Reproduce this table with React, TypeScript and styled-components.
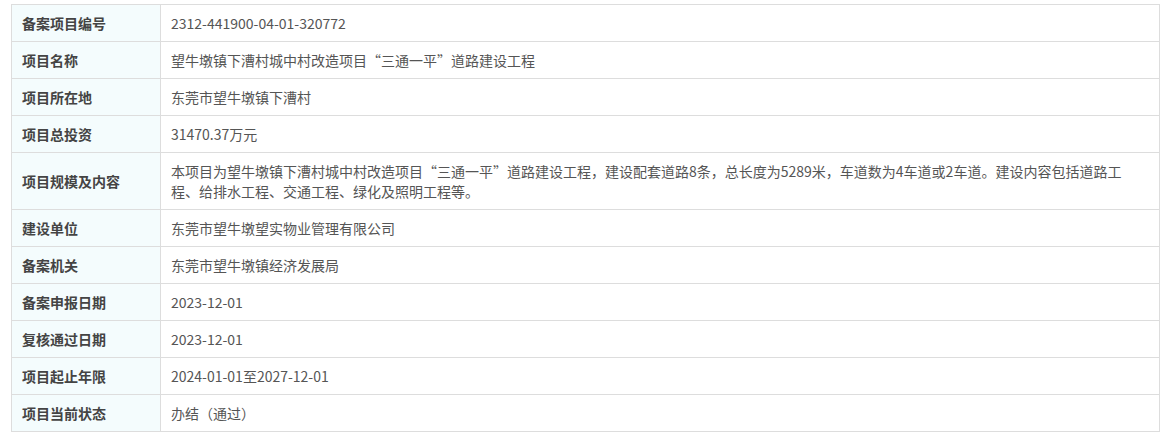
import React from "react";
import styled, { createGlobalStyle } from "styled-components";

const GlobalStyle = createGlobalStyle`
  body {
    margin: 0;
    background: #fff;
    font-family: "Noto Sans CJK SC", "Noto Sans", sans-serif;
  }
`;

const Page = styled.div`
  padding: 4px 7px 0 11px;
`;

const Table = styled.table`
  width: 100%;
  border-collapse: collapse;
  table-layout: fixed;
  font-size: 14px;
  line-height: 20px;
`;

const Label = styled.th`
  width: 128px;
  padding: 8px 10px;
  background: #f4fcfd;
  border: 1px solid #dddddd;
  color: #444;
  font-weight: bold;
  text-align: left;
  vertical-align: middle;
`;

const Value = styled.td`
  padding: 8px 10px;
  border: 1px solid #dddddd;
  color: #555;
  vertical-align: middle;
`;

const rows: [string, string][] = [
  ["备案项目编号", "2312-441900-04-01-320772"],
  ["项目名称", "望牛墩镇下漕村城中村改造项目“三通一平”道路建设工程"],
  ["项目所在地", "东莞市望牛墩镇下漕村"],
  ["项目总投资", "31470.37万元"],
  [
    "项目规模及内容",
    "本项目为望牛墩镇下漕村城中村改造项目“三通一平”道路建设工程，建设配套道路8条，总长度为5289米，车道数为4车道或2车道。建设内容包括道路工程、给排水工程、交通工程、绿化及照明工程等。",
  ],
  ["建设单位", "东莞市望牛墩望实物业管理有限公司"],
  ["备案机关", "东莞市望牛墩镇经济发展局"],
  ["备案申报日期", "2023-12-01"],
  ["复核通过日期", "2023-12-01"],
  ["项目起止年限", "2024-01-01至2027-12-01"],
  ["项目当前状态", "办结（通过）"],
];

export default function App() {
  return (
    <Page>
      <GlobalStyle />
      <Table>
        <tbody>
          {rows.map(([label, value]) => (
            <tr key={label}>
              <Label>{label}</Label>
              <Value>{value}</Value>
            </tr>
          ))}
        </tbody>
      </Table>
    </Page>
  );
}
